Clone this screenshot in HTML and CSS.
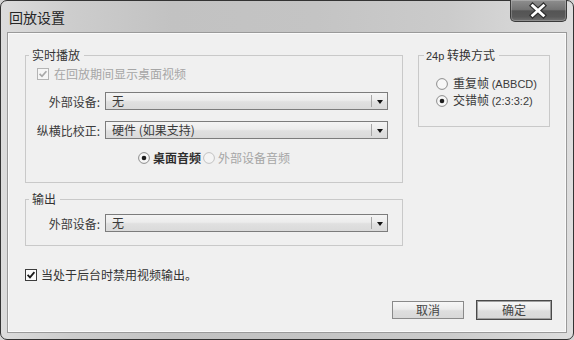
FILE: index.html
```html
<!DOCTYPE html>
<html lang="zh-CN">
<head>
<meta charset="utf-8">
<title>回放设置</title>
<link rel="stylesheet" href="styles.css">
</head>
<body>
<div class="window">
  <div class="titlebar">
    <div class="title">回放设置</div>
    <div class="close">
      <svg width="57" height="21" viewBox="0 0 57 21">
        <path d="M23 5.5 L34 15.5 M34 5.5 L23 15.5" stroke="#2e2e2e" stroke-width="5.2" stroke-linecap="square"/>
        <path d="M23 5.5 L34 15.5 M34 5.5 L23 15.5" stroke="#fff" stroke-width="2.8" stroke-linecap="square"/>
      </svg>
    </div>
  </div>
  <div class="client">
    <div class="top-row">
      <div class="group g-live">
        <div class="gtitle">实时播放</div>
        <div class="check disabled">
          <svg class="box" width="12" height="12" viewBox="0 0 12 12"><rect x="0.5" y="0.5" width="11" height="11" fill="#f6f6f6" stroke="#b4b4b4"/><path d="M2.6 5.8 L5 8.3 L9.4 3.2" fill="none" stroke="#a8a8a8" stroke-width="1.7"/></svg>
          <span>在回放期间显示桌面视频</span>
        </div>
        <div class="field f1">
          <span class="flabel">外部设备:</span>
          <div class="select"><span class="val">无</span><span class="sep"></span><span class="arrow"></span></div>
        </div>
        <div class="field f2">
          <span class="flabel">纵横比校正:</span>
          <div class="select"><span class="val">硬件 (如果支持)</span><span class="sep"></span><span class="arrow"></span></div>
        </div>
        <div class="radios">
          <span class="radio">
            <svg class="rb" width="12" height="12" viewBox="0 0 12 12"><circle cx="6" cy="6" r="5.4" fill="#f7f7f7" stroke="#8c8c8c"/><circle cx="6" cy="6" r="2.3" fill="#1e1e1e"/></svg>
            <span class="strong">桌面音频</span>
          </span>
          <span class="radio disabled">
            <svg class="rb" width="12" height="12" viewBox="0 0 12 12"><circle cx="6" cy="6" r="5.4" fill="#f4f4f4" stroke="#c2c2c2"/></svg>
            <span>外部设备音频</span>
          </span>
        </div>
      </div>
      <div class="group g-24p">
        <div class="gtitle"><span class="lat">24p</span>&nbsp;转换方式</div>
        <div class="radio r24 first">
          <svg class="rb" width="12" height="12" viewBox="0 0 12 12"><circle cx="6" cy="6" r="5.4" fill="#f7f7f7" stroke="#8c8c8c"/></svg>
          <span>重复帧 <span class="lat">(ABBCD)</span></span>
        </div>
        <div class="radio r24">
          <svg class="rb" width="12" height="12" viewBox="0 0 12 12"><circle cx="6" cy="6" r="5.4" fill="#f7f7f7" stroke="#8c8c8c"/><circle cx="6" cy="6" r="2.3" fill="#1e1e1e"/></svg>
          <span>交错帧 <span class="lat">(2:3:3:2)</span></span>
        </div>
      </div>
    </div>
    <div class="group g-out">
      <div class="gtitle">输出</div>
      <div class="field f3">
        <span class="flabel">外部设备:</span>
        <div class="select"><span class="val">无</span><span class="sep"></span><span class="arrow"></span></div>
      </div>
    </div>
    <div class="check bottom">
      <svg class="box" width="12" height="12" viewBox="0 0 12 12"><rect x="0.5" y="0.5" width="11" height="11" fill="#fbfbfb" stroke="#3c3c3c"/><path d="M2.6 5.8 L5 8.3 L9.4 3.2" fill="none" stroke="#1a1a1a" stroke-width="1.8"/></svg>
      <span>当处于后台时禁用视频输出。</span>
    </div>
    <div class="buttons">
      <div class="btn cancel">取消</div>
      <div class="btn ok">确定</div>
    </div>
  </div>
</div>
</body>
</html>
```
FILE: styles.css
```css
html, body {
  margin: 0;
  padding: 0;
  background: #d4d4d4;
}
body {
  width: 574px;
  height: 340px;
  overflow: hidden;
  font-family: "Noto Sans CJK SC", "Liberation Sans", sans-serif;
  font-size: 12px;
  color: #3a3a3a;
}
.window {
  box-sizing: border-box;
  width: 574px;
  height: 340px;
  border: 1px solid #333;
  border-radius: 7px;
  background: linear-gradient(90deg, #dcdcdc 0%, #cdcdcd 12%, #c2c2c2 30%, #c4c4c4 55%, #cbcbcb 78%, #dedede 100%);
  display: flex;
  flex-direction: column;
}
.titlebar {
  height: 31px;
  display: flex;
  justify-content: space-between;
  align-items: flex-start;
}
.title {
  font-size: 14px;
  line-height: 18px;
  margin: 7px 0 0 8px;
  color: #262626;
}
.close {
  box-sizing: border-box;
  width: 57px;
  height: 22px;
  margin: -1px 6px 0 0;
  border: 1px solid #3a3a3a;
  border-top: none;
  border-radius: 0 0 5px 5px;
  background: linear-gradient(#8e8e8e 0%, #747474 45%, #545454 52%, #595959 80%, #727272 100%);
  box-shadow: inset 0 0 0 1px rgba(255,255,255,0.22);
  display: flex;
}
.close svg { display: block; margin-left: -1px; }
.client {
  box-sizing: border-box;
  width: 560px;
  height: 301px;
  margin-left: 6px;
  border: 1px solid #9a9a9a;
  background: #f0f0f0;
  box-shadow: inset 0 0 0 1px #fafafa;
  display: flex;
  flex-direction: column;
}
.top-row {
  display: flex;
  align-items: flex-start;
  gap: 15px;
  margin: 22px 0 0 17px;
}
.group {
  box-sizing: border-box;
  border: 1px solid #c9c9c9;
  display: flex;
  flex-direction: column;
  align-items: flex-start;
}
.gtitle {
  line-height: 14px;
  height: 14px;
  margin: -8px 0 0 3px;
  padding: 0 4px 0 3px;
  background: #f0f0f0;
  color: #333;
  white-space: nowrap;
}
.lat {
  font-family: "Liberation Sans", sans-serif;
  font-size: 11px;
}
.g-live {
  width: 378px;
  height: 128px;
}
.g-24p {
  width: 132px;
  height: 72px;
}
.g-24p .gtitle { margin-left: 5px; padding-left: 2px; }
.g-out {
  width: 378px;
  height: 47px;
  margin: 16px 0 0 17px;
}
.check, .radio {
  display: flex;
  align-items: center;
  line-height: 14px;
  white-space: nowrap;
}
.check svg, .radio svg { display: block; flex: none; }
.disabled { color: #a6a6a6; }
.g-live .check {
  margin: 5px 0 0 11px;
  gap: 5px;
}
.field {
  display: flex;
  align-items: center;
}
.f1 { margin-top: 11px; }
.f2 { margin-top: 11px; }
.f3 { margin-top: 8px; }
.flabel {
  width: 74px;
  margin-right: 5px;
  text-align: right;
  white-space: nowrap;
  color: #3a3a3a;
}
.select {
  box-sizing: border-box;
  width: 283px;
  height: 18px;
  border: 1px solid #7c7c7c;
  background: linear-gradient(#f4f4f4 0%, #ececec 45%, #e0e0e0 55%, #dadada 100%);
  display: flex;
  align-items: center;
}
.val {
  flex: 1;
  padding-left: 6px;
  line-height: 14px;
  color: #3a3a3a;
}
.sep {
  width: 1px;
  height: 12px;
  background: #a6a6a6;
}
.arrow {
  width: 15px;
  height: 16px;
  display: flex;
  align-items: center;
  justify-content: center;
}
.arrow::after {
  content: "";
  border-left: 3px solid transparent;
  border-right: 3px solid transparent;
  border-top: 4px solid #111;
  margin-top: 1px;
}
.radios {
  display: flex;
  align-items: center;
  margin: 12px 0 0 112px;
  gap: 2px;
}
.radios .radio { gap: 3px; }
.strong { font-weight: bold; color: #2e2e2e; }
.r24 {
  line-height: 16px;
  margin-left: 17px;
  gap: 5px;
  color: #3a3a3a;
}
.r24.first { margin-top: 13px; }
.check.bottom {
  margin: 22px 0 0 17px;
  gap: 4px;
  color: #333;
}
.buttons {
  display: flex;
  justify-content: flex-end;
  align-items: center;
  gap: 12px;
  margin-top: 18px;
  padding-right: 14px;
}
.btn {
  box-sizing: border-box;
  display: flex;
  align-items: center;
  justify-content: center;
  color: #444;
  background: linear-gradient(#f7f7f7 0%, #ececec 45%, #dedede 55%, #d8d8d8 100%);
  line-height: 14px;
}
.cancel {
  width: 72px;
  height: 18px;
  border: 1px solid #8a8a8a;
}
.ok {
  width: 76px;
  height: 20px;
  border: 1px solid #4a4a4a;
  box-shadow: inset 0 0 0 1px #a0a0a0;
}
```
